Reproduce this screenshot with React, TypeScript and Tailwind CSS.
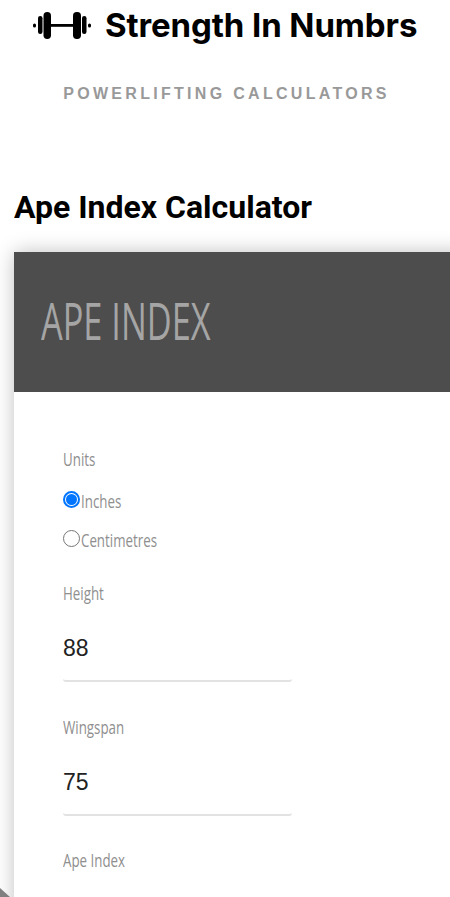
const Dumbbell = () => (
  <svg width="58" height="27" viewBox="0 0 58 27" fill="#000">
    <rect x="0" y="11.5" width="3" height="4" rx="1.5" />
    <rect x="5" y="4" width="4.5" height="18" rx="2.2" />
    <rect x="10.5" y="0" width="7.5" height="27" rx="3.7" />
    <rect x="18" y="12" width="22" height="2.8" />
    <rect x="40" y="0" width="8" height="27" rx="3.7" />
    <rect x="49" y="4" width="4.5" height="18" rx="2.2" />
    <rect x="55" y="11.5" width="3" height="4" rx="1.5" />
  </svg>
);

const labelClass =
  "block origin-left scale-x-[0.74] whitespace-nowrap font-['Open_Sans',sans-serif] text-[18px] leading-[24px] text-[#8f8f8f]";

function Radio({ label, checked }: { label: string; checked?: boolean }) {
  return (
    <label className="flex h-[20px] items-center">
      <span
        className={
          checked
            ? "flex h-[17px] w-[17px] shrink-0 items-center justify-center rounded-full border-2 border-[#0075ff]"
            : "h-[17px] w-[17px] shrink-0 rounded-full border-[1.5px] border-[#767676]"
        }
      >
        {checked && <span className="h-[11px] w-[11px] rounded-full bg-[#0075ff]" />}
      </span>
      <span className={`${labelClass} ml-[1px] pt-[4px]`}>{label}</span>
    </label>
  );
}

function Field({ label, value }: { label: string; value: string }) {
  return (
    <div>
      <span className={labelClass}>{label}</span>
      <div className="mt-[30px] h-[47px] w-[229px] rounded-b-[3px] border-b-2 border-[#e2e2e2] font-['Liberation_Sans',sans-serif] text-[23px] leading-[27px] text-[#222]">
        {value}
      </div>
    </div>
  );
}

export default function App() {
  return (
    <div className="relative h-[897px] w-[450px] overflow-hidden bg-white">
      <div className="flex h-[50px] items-center pl-[33px]">
        <Dumbbell />
        <span className="ml-[14px] whitespace-nowrap font-['Inter',sans-serif] text-[33px] font-bold leading-[40px] tracking-[-0.1px] text-black">
          Strength In Numbrs
        </span>
      </div>
      <p className="mt-[34px] pl-[3px] text-center font-['Liberation_Sans',sans-serif] text-[16px] font-bold leading-[20px] tracking-[3.3px] text-[#999]">
        POWERLIFTING CALCULATORS
      </p>
      <h1 className="ml-[14px] mt-[83px] font-['Roboto',sans-serif] text-[32px] font-bold leading-[40px] text-black">
        Ape Index Calculator
      </h1>
      <section className="ml-[14px] mt-[25px] h-[700px] w-[600px] rounded-[6px] bg-white shadow-[0_0_20px_rgba(0,0,0,0.25)]">
        <div className="h-[140px] bg-[#4d4d4d] pl-[27px] pt-[38px]">
          <h2 className="origin-left scale-x-[0.66] whitespace-nowrap font-['Open_Sans',sans-serif] text-[52px] font-medium leading-[60px] text-[#a5a5a5]">
            APE INDEX
          </h2>
        </div>
        <div className="pl-[49px] pt-[55px]">
          <span className={labelClass}>Units</span>
          <div className="mt-[18px] flex flex-col gap-[19px]">
            <Radio label="Inches" checked />
            <Radio label="Centimetres" />
          </div>
          <div className="mt-[33px] flex flex-col gap-[33px]">
            <Field label="Height" value="88" />
            <Field label="Wingspan" value="75" />
          </div>
          <div className="mt-[32px]">
            <span className={labelClass}>Ape Index</span>
          </div>
        </div>
      </section>
      <svg className="absolute bottom-0 left-0" width="10" height="9" viewBox="0 0 10 9" fill="#808080">
        <path d="M0 0 L10 9 L0 9 Z" />
      </svg>
    </div>
  );
}
